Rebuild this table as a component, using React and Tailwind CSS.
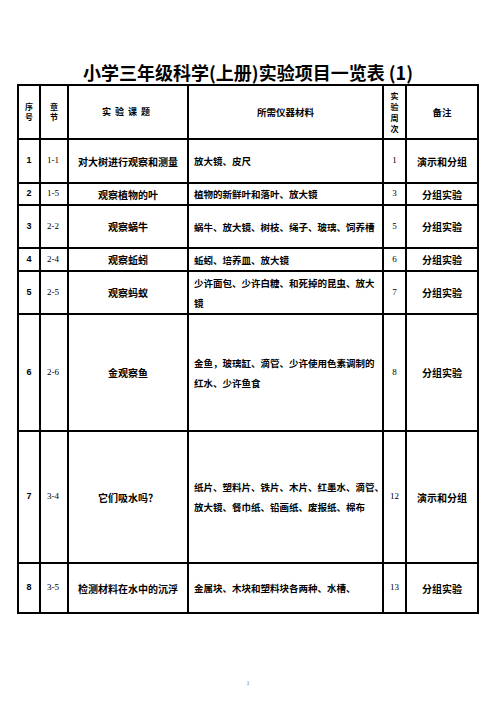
import React from 'react';

const cjk = { fontFamily: '"Noto Sans CJK SC", "Noto Sans", sans-serif' };
const serif = { fontFamily: '"Liberation Serif", "Noto Sans CJK SC", serif' };
const arial = { fontFamily: '"Liberation Sans", Arial, sans-serif' };

const rows = [
  { no: '1', ch: '1-1', title: '对大树进行观察和测量', mat: ['放大镜、皮尺'], week: '1', note: '演示和分组', h: 'h-[44px]' },
  { no: '2', ch: '1-5', title: '观察植物的叶', mat: ['植物的新鲜叶和落叶、放大镜'], week: '3', note: '分组实验', h: 'h-[22px]' },
  { no: '3', ch: '2-2', title: '观察蜗牛', mat: ['蜗牛、放大镜、树枝、绳子、玻璃、饲养槽'], week: '5', note: '分组实验', h: 'h-[43px]' },
  { no: '4', ch: '2-4', title: '观察蚯蚓', mat: ['蚯蚓、培养皿、放大镜'], week: '6', note: '分组实验', h: 'h-[23px]' },
  { no: '5', ch: '2-5', title: '观察蚂蚁', mat: ['少许面包、少许白糖、和死掉的昆虫、放大', '镜'], week: '7', note: '分组实验', h: 'h-[43px]' },
  { no: '6', ch: '2-6', title: '金观察鱼', mat: ['金鱼，玻璃缸、滴管、少许使用色素调制的', '红水、少许鱼食'], week: '8', note: '分组实验', h: 'h-[117px]' },
  { no: '7', ch: '3-4', title: '它们吸水吗？', mat: ['纸片、塑料片、铁片、木片、红墨水、滴管、', '放大镜、餐巾纸、铅画纸、废报纸、棉布'], week: '12', note: '演示和分组', h: 'h-[132px]' },
  { no: '8', ch: '3-5', title: '检测材料在水中的沉浮', mat: ['金属块、木块和塑料块各两种、水槽、'], week: '13', note: '分组实验', h: 'h-[50px]' },
];

const td = 'border-2 border-black p-0 align-middle';

export default function App() {
  return (
    <div className="w-[496px] h-[702px] bg-white relative text-black">
      <div className="pt-[60px] text-center text-[18px] font-bold leading-[24px]" style={cjk}>
        小学三年级科学(上册)实验项目一览表 (1)
      </div>
      <table className="ml-[17px] w-[460px] border-collapse table-fixed">
        <colgroup>
          <col className="w-[22px]" />
          <col className="w-[28px]" />
          <col className="w-[120px]" />
          <col className="w-[195px]" />
          <col className="w-[23px]" />
          <col className="w-[72px]" />
        </colgroup>
        <thead>
          <tr className="h-[54px] text-[8px] font-bold" style={cjk}>
            <th className={td}><div className="leading-[10px]">序<br />号</div></th>
            <th className={td}><div className="leading-[10px]">章<br />节</div></th>
            <th className={td + ' text-[9px] tracking-[4px]'}>实验课题</th>
            <th className={td + ' text-[9.5px]'}>所需仪器材料</th>
            <th className={td}><div className="leading-[11px]">实<br />验<br />周<br />次</div></th>
            <th className={td + ' text-[9.5px]'}>备注</th>
          </tr>
        </thead>
        <tbody>
          {rows.map((r) => (
            <tr key={r.no} className={r.h}>
              <td className={td + ' text-center text-[9px] font-bold'} style={arial}>{r.no}</td>
              <td className={td + ' pl-[6px] text-[9px]'} style={serif}>{r.ch}</td>
              <td className={td + ' text-center text-[10px] font-bold whitespace-nowrap'} style={cjk}>{r.title}</td>
              <td className={td + ' pl-[5px] text-[9.5px] font-bold leading-[20px] whitespace-nowrap'} style={cjk}>
                {r.mat.map((m, i) => (
                  <div key={i}>{m}</div>
                ))}
              </td>
              <td className={td + ' text-center text-[9px]'} style={serif}>{r.week}</td>
              <td className={td + ' text-center text-[10px] font-bold'} style={cjk}>{r.note}</td>
            </tr>
          ))}
        </tbody>
      </table>
      <div className="absolute left-0 right-0 top-[679px] text-center text-[6px] text-gray-500" style={serif}>1</div>
    </div>
  );
}
